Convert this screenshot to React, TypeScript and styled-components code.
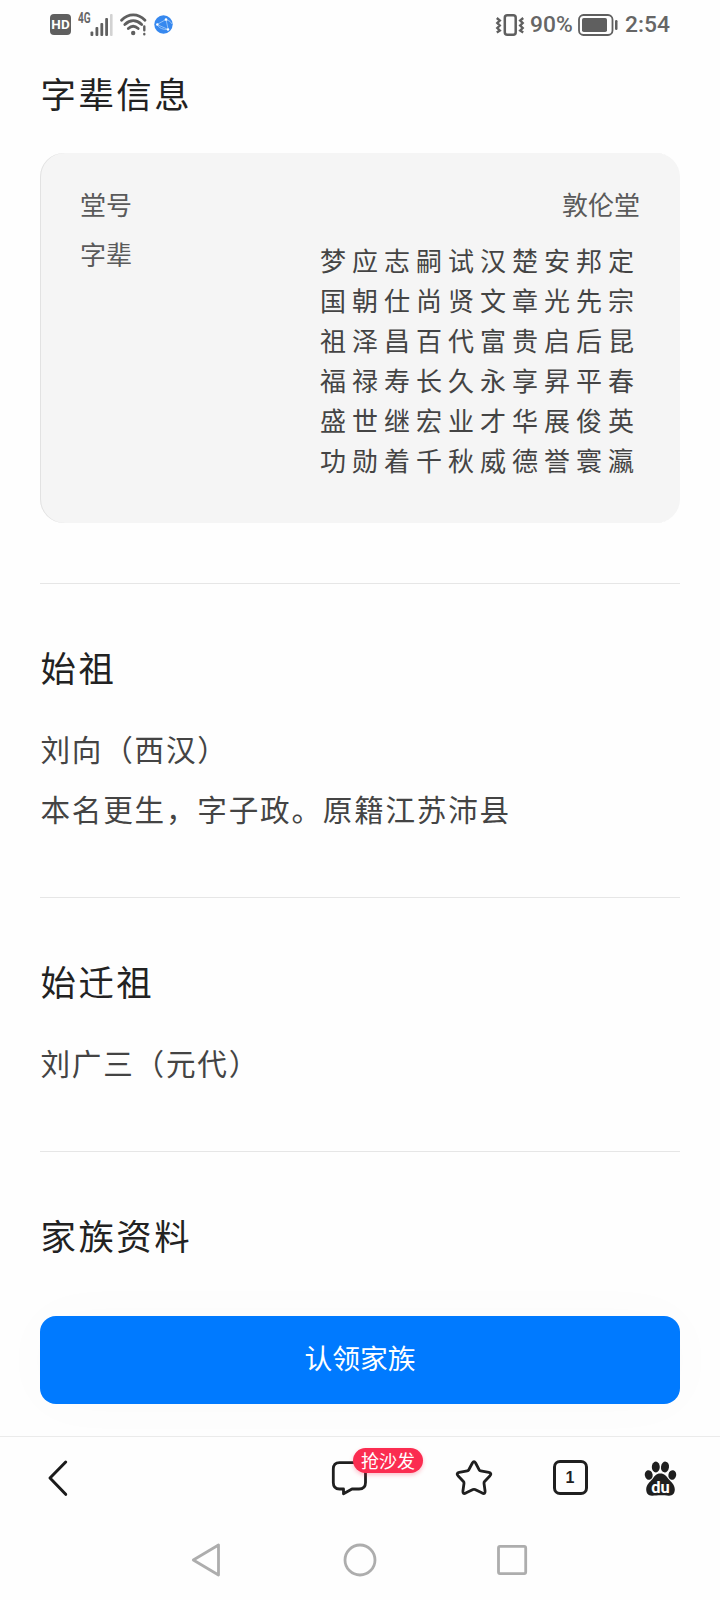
import React from "react";
import styled, { createGlobalStyle } from "styled-components";

const GlobalStyle = createGlobalStyle`
  * { box-sizing: border-box; }
  body {
    margin: 0;
    background: #fefefe;
    font-family: "Noto Sans CJK SC", "Noto Sans", sans-serif;
  }
  svg { display: block; overflow: visible; flex: none; }
  h2, p { margin: 0; font-weight: 400; }
`;

const Screen = styled.div`
  display: flex;
  flex-direction: column;
  width: 720px;
  height: 1600px;
  overflow: hidden;
  background: #fefefe;
`;

const StatusBar = styled.header`
  display: flex;
  align-items: center;
  justify-content: space-between;
  flex: none;
  height: 49px;
  padding: 0 50px;
  color: #666;
`;

const StatusGroup = styled.div`
  display: flex;
  align-items: center;
`;

const StatusIcon = styled.span<{ $left: number }>`
  margin-left: ${(p) => p.$left}px;
`;

const HdBadge = styled.span`
  width: 21px;
  height: 21px;
  border-radius: 4px;
  background: #5f5f5f;
  color: #fff;
  font: 700 13.5px/21px Roboto, sans-serif;
  text-align: center;
`;

const NetworkLabel = styled.span`
  align-self: flex-start;
  margin-left: 7px;
  width: 12px;
  font: 700 14px/13px Roboto, sans-serif;
  transform: scaleX(0.72);
  transform-origin: left;
  margin-top: -1px;
`;

const StatusText = styled.span<{ $left: number; $width: number }>`
  margin-left: ${(p) => p.$left}px;
  width: ${(p) => p.$width}px;
  white-space: nowrap;
  font: 500 22.8px/51px Roboto, sans-serif;
`;

const Content = styled.main`
  flex: 1;
  min-height: 0;
  padding: 18px 40px 0;
`;

const Heading = styled.h2`
  padding-left: 0.5px;
  font-size: 35.4px;
  line-height: 52px;
  letter-spacing: 2.5px;
  color: #222;
`;

const InfoCard = styled.section`
  margin: 34px 0 60px;
  padding: 26px 40px 44px;
  border-radius: 24px;
  background: #f5f5f5;
  box-shadow: inset 1px 0 0 #e2e2e2;
`;

const InfoRow = styled.div`
  display: flex;
  justify-content: space-between;
  font-size: 26px;
  line-height: 50px;
  color: #5a5a5a;
`;

const Generations = styled.div`
  display: grid;
  grid-template-columns: repeat(10, 32px);
  grid-auto-rows: 40px;
  margin-top: 11px;
  margin-bottom: -1px;
  line-height: 40px;
  color: #444;
`;

const Section = styled.section<{ $bottom?: number }>`
  padding: 57px 0 ${(p) => p.$bottom ?? 58}px;
  border-top: 1px solid #e6e6e6;
`;

const Body = styled.div`
  margin-top: 26px;
  padding-left: 0.5px;
  font-size: 29.6px;
  line-height: 60px;
  letter-spacing: 1.77px;
  color: #444;
`;

const ClaimBar = styled.div`
  flex: none;
  padding: 0 40px 32px;
`;

const ClaimButton = styled.button`
  display: block;
  width: 100%;
  height: 88px;
  padding: 0 0 6px;
  border: 0;
  border-radius: 16px;
  background: #007aff;
  box-shadow: 0 0 60px rgba(0, 0, 0, 0.02);
  color: #fff;
  font: 400 27.8px/82px "Noto Sans CJK SC", sans-serif;
`;

const Toolbar = styled.nav`
  display: flex;
  align-items: center;
  flex: none;
  height: 84px;
  padding: 0 40px 2px 38px;
  border-top: 1px solid #ebebeb;
  background: #fefefe;
`;

const ToolItem = styled.div<{ $gap?: string }>`
  position: relative;
  display: flex;
  align-items: center;
  justify-content: center;
  width: 40px;
  height: 40px;
  margin-left: ${(p) => p.$gap ?? "0"};
`;

const CommentBadge = styled.span`
  position: absolute;
  left: 24px;
  top: -10px;
  width: 70px;
  height: 25px;
  border-radius: 13px;
  background: #fb2c50;
  box-shadow: 0 2px 4px rgba(251, 44, 80, 0.3);
  color: #fff;
  font-size: 18px;
  line-height: 25px;
  text-align: center;
`;

const TabCount = styled.span`
  width: 35px;
  height: 35px;
  border: 3px solid #1f1f1f;
  border-radius: 7px;
  color: #1f1f1f;
  font: 700 16px/30px "Liberation Sans", sans-serif;
  text-align: center;
`;

const SystemNav = styled.footer`
  display: flex;
  align-items: center;
  justify-content: center;
  gap: 113px;
  flex: none;
  height: 80px;
`;

const generations = [
  "梦应志嗣试汉楚安邦定",
  "国朝仕尚贤文章光先宗",
  "祖泽昌百代富贵启后昆",
  "福禄寿长久永享昇平春",
  "盛世继宏业才华展俊英",
  "功勋着千秋威德誉寰瀛",
];

const Signal = () => (
  <svg width="23" height="22" viewBox="0 0 23 22" fill="#5f5f5f">
    <rect x="0.5" y="17.5" width="2.8" height="4.5" rx="1" />
    <rect x="5.5" y="13" width="2.8" height="9" rx="1" />
    <rect x="10.4" y="9" width="2.8" height="13" rx="1" />
    <rect x="15.2" y="4" width="2.8" height="18" rx="1" />
    <rect x="20" y="0" width="2.6" height="22" rx="1" fill="#d2d2d2" />
  </svg>
);

const Wifi = () => (
  <svg width="27" height="23" viewBox="0 0 27 23" fill="none" stroke="#5f5f5f" strokeWidth="2.8" strokeLinecap="round">
    <path d="M1.500 7.200C8.500 0 18 0 25 7.200" />
    <path d="M4.800 11.500C10 6.500 16.500 6.500 21.700 11.500" />
    <path d="M8.300 15.500C11.300 12.700 15 12.700 18.200 15.500" />
    <circle cx="13.200" cy="20" r="2.200" fill="#5f5f5f" stroke="none" />
    <path d="M24.300 13.500v3.800M24.300 21v.2" strokeWidth="2.400" />
  </svg>
);

const Globe = () => (
  <svg width="19" height="19" viewBox="0 0 19 19">
    <circle cx="9.500" cy="9.500" r="9.200" fill="#3688ef" />
    <path d="M3 9.500L12 4.500L14.200 14.500ZM12 4.500Q17 6 18 9M3 9.500Q6 15 14.200 14.500" fill="none" stroke="#8fbff8" strokeWidth="1" />
    <g fill="#fff">
      <circle cx="3.300" cy="9.500" r="1.200" />
      <circle cx="12" cy="4.500" r="1.300" />
      <circle cx="14" cy="14.500" r="1.200" />
    </g>
  </svg>
);

const Vibrate = () => (
  <svg width="28" height="22" viewBox="0 0 28 22" fill="none" stroke="#5f5f5f">
    <rect x="8.800" y="1.300" width="10.900" height="19.400" rx="2.500" strokeWidth="2.500" />
    <path d="M0.800 4l3 2.500l-2.500 2.500l2.500 2.500l-2.500 2.500l2.500 2.500l-3 2M27.200 4l-3 2.500l2.500 2.500l-2.500 2.500l2.500 2.500l-2.500 2.500l3 2" strokeWidth="2.400" />
  </svg>
);

const Battery = () => (
  <svg width="40" height="22" viewBox="0 0 40 22">
    <rect x="1" y="1" width="33.500" height="20" rx="4.500" fill="none" stroke="#5f5f5f" strokeWidth="1.800" />
    <rect x="4" y="4" width="25" height="14" rx="1.800" fill="#5f5f5f" />
    <rect x="37" y="6" width="2.500" height="10" rx="1.200" fill="#5f5f5f" />
  </svg>
);

const Back = () => (
  <svg width="40" height="40" viewBox="0 0 40 40" fill="none" stroke="#1b1b1b" strokeWidth="3" strokeLinecap="round" strokeLinejoin="round">
    <path d="M27.700 4L12 20L27.700 36.300" />
  </svg>
);

const Comment = () => (
  <svg width="40" height="40" viewBox="0 0 40 40" fill="none" stroke="#1f1f1f" strokeWidth="2.800" strokeLinejoin="round" strokeLinecap="round">
    <path d="M10.500 4.700H30Q36.500 4.700 36.500 11V24.500Q36.500 31 30 31H23L14.500 35.800V31H10.500Q4.300 31 4.300 24.500V11Q4.300 4.700 10.500 4.700Z" />
  </svg>
);

const Star = () => (
  <svg width="40" height="40" viewBox="0 0 40 40" fill="none" stroke="#1f1f1f" strokeWidth="2.800" strokeLinejoin="round">
    <path d="M18.400 5Q20 2.300 21.600 5L25.200 11.800Q25.700 12.700 26.700 12.900L34.800 14.400Q38.200 15.200 36 17.700L30.600 23.500Q29.900 24.300 30 25.300L31.100 33.200Q31.300 36.400 28.300 35.100L21 31.500Q20 31.100 19 31.500L11.700 35.100Q8.700 36.400 8.900 33.200L10 25.300Q10.100 24.300 9.400 23.500L4 17.700Q1.800 15.200 5.200 14.400L13.300 12.900Q14.300 12.700 14.800 11.800Z" />
  </svg>
);

const Paw = () => (
  <svg width="40" height="40" viewBox="0 0 40 40" fill="#1f1f1f">
    <ellipse cx="8.700" cy="17" rx="3.900" ry="4.900" transform="rotate(-12 8.700 17)" />
    <ellipse cx="15.800" cy="9" rx="4" ry="5.400" />
    <ellipse cx="25" cy="9" rx="4" ry="5.400" transform="rotate(8 25 9)" />
    <ellipse cx="32.300" cy="17" rx="3.900" ry="4.900" transform="rotate(12 32.300 17)" />
    <path d="M20.300 15.500C24.500 15.500 26.500 18 28.500 21C31 24 34.800 26.500 34.800 31.500C34.800 35.500 32.500 38 28.500 37.700C24 37 17 37 12.500 37.700C8.500 38 6.200 35.500 6.200 31.500C6.200 26.500 10 24 12.500 21C14.500 18 16 15.500 20.300 15.500Z" />
    <text x="20.500" y="34.500" fill="#fff" textAnchor="middle" fontFamily="Roboto, sans-serif" fontSize="16.500" fontWeight="700">du</text>
  </svg>
);

export default function App() {
  return (
    <Screen>
      <GlobalStyle />
      <StatusBar>
        <StatusGroup>
          <HdBadge>HD</HdBadge>
          <NetworkLabel>4G</NetworkLabel>
          <Signal />
          <StatusIcon $left={7}><Wifi /></StatusIcon>
          <StatusIcon $left={7}><Globe /></StatusIcon>
        </StatusGroup>
        <StatusGroup>
          <Vibrate />
          <StatusText $left={6} $width={43}>90%</StatusText>
          <StatusIcon $left={5}><Battery /></StatusIcon>
          <StatusText $left={7} $width={45}>2:54</StatusText>
        </StatusGroup>
      </StatusBar>

      <Content>
        <Heading>字辈信息</Heading>
        <InfoCard>
          <InfoRow>
            <span>堂号</span>
            <span>敦伦堂</span>
          </InfoRow>
          <InfoRow>
            <span>字辈</span>
            <Generations>
              {generations.flatMap((line) => [...line].map((char) => <span key={char}>{char}</span>))}
            </Generations>
          </InfoRow>
        </InfoCard>
        <Section>
          <Heading>始祖</Heading>
          <Body>
            <p>刘向（西汉）</p>
            <p>本名更生，字子政。原籍江苏沛县</p>
          </Body>
        </Section>
        <Section>
          <Heading>始迁祖</Heading>
          <Body>
            <p>刘广三（元代）</p>
          </Body>
        </Section>
        <Section $bottom={0}>
          <Heading>家族资料</Heading>
        </Section>
      </Content>

      <ClaimBar>
        <ClaimButton>认领家族</ClaimButton>
      </ClaimBar>

      <Toolbar>
        <ToolItem><Back /></ToolItem>
        <ToolItem $gap="auto">
          <Comment />
          <CommentBadge>抢沙发</CommentBadge>
        </ToolItem>
        <ToolItem $gap="85px"><Star /></ToolItem>
        <ToolItem $gap="56px"><TabCount>1</TabCount></ToolItem>
        <ToolItem $gap="50px"><Paw /></ToolItem>
      </Toolbar>

      <SystemNav>
        <svg width="40" height="40" viewBox="0 0 40 40" fill="none" stroke="#adadad" strokeWidth="2.800" strokeLinejoin="round">
          <path d="M6.300 20L31.500 5V35Z" />
        </svg>
        <svg width="40" height="40" viewBox="0 0 40 40" fill="none" stroke="#adadad" strokeWidth="2.800">
          <circle cx="20" cy="20" r="15" />
        </svg>
        <svg width="40" height="40" viewBox="0 0 40 40" fill="none" stroke="#adadad" strokeWidth="2.800">
          <rect x="5.500" y="6.400" width="27.200" height="27.200" rx="1.500" />
        </svg>
      </SystemNav>
    </Screen>
  );
}
